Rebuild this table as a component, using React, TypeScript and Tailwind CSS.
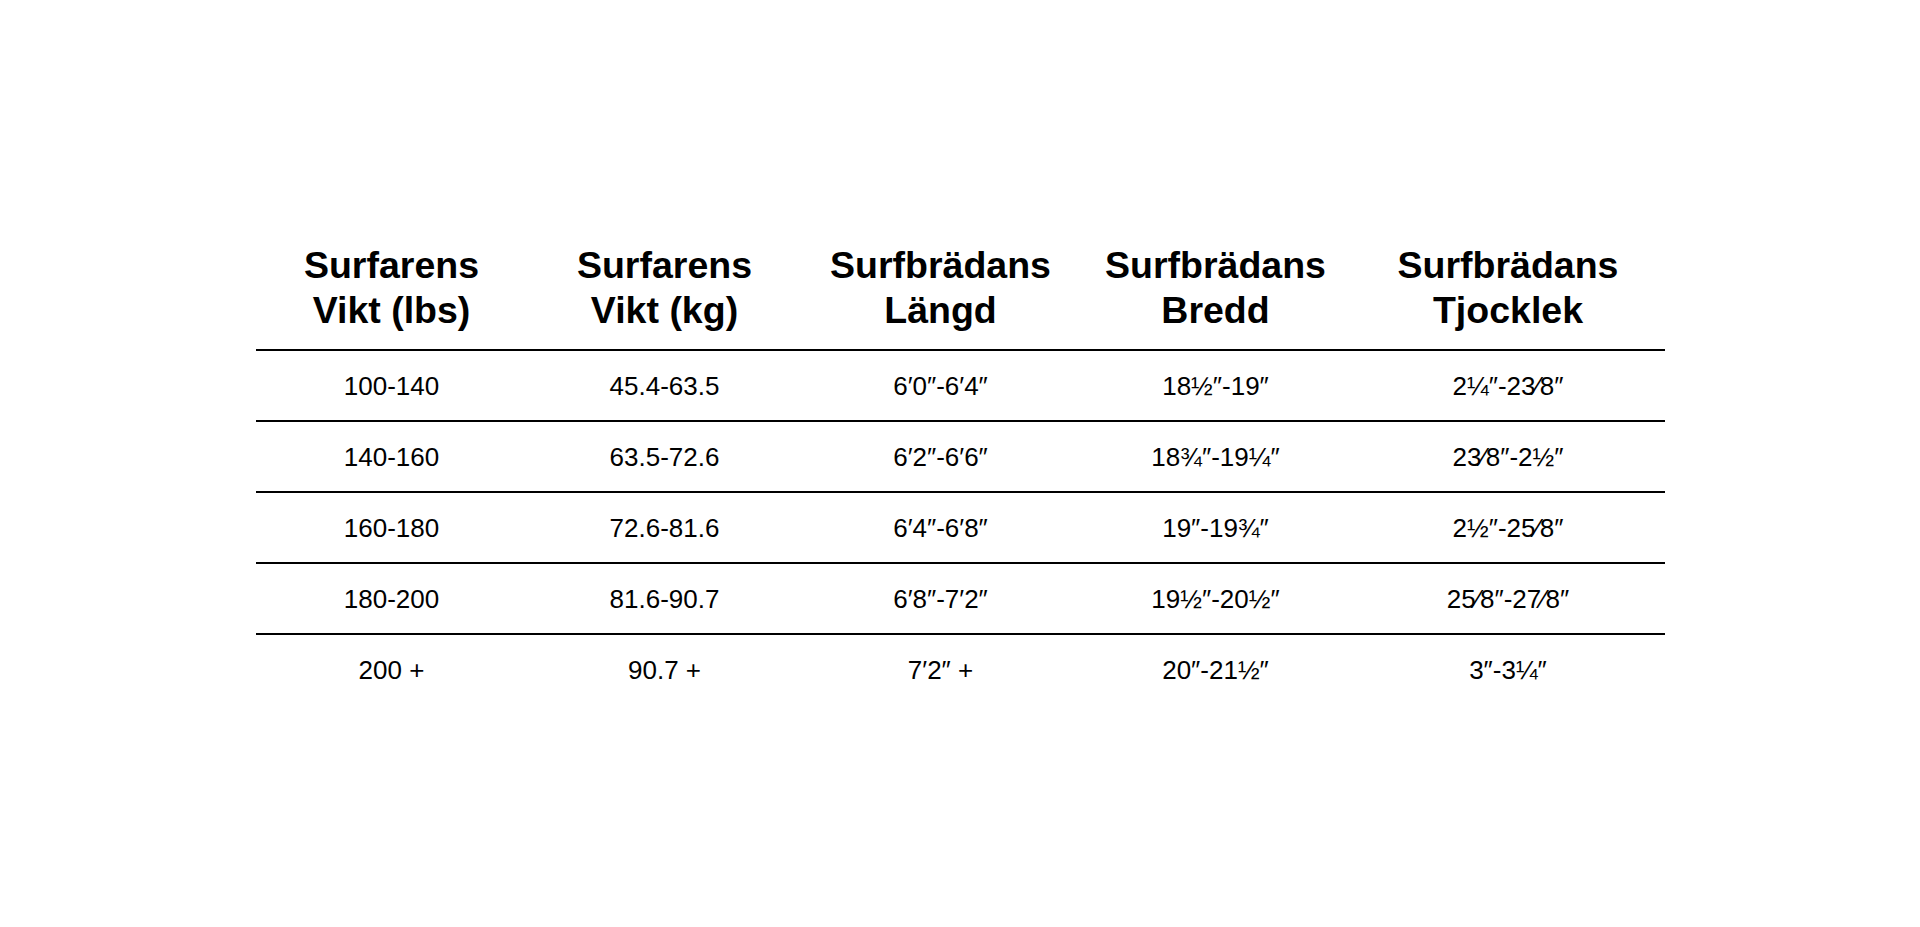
import React from "react";

const headers: [string, string][] = [
  ["Surfarens", "Vikt (lbs)"],
  ["Surfarens", "Vikt (kg)"],
  ["Surfbrädans", "Längd"],
  ["Surfbrädans", "Bredd"],
  ["Surfbrädans", "Tjocklek"],
];

const rows: string[][] = [
  ["100-140", "45.4-63.5", "6′0″-6′4″", "18½″-19″", "2¼″-23⁄8″"],
  ["140-160", "63.5-72.6", "6′2″-6′6″", "18¾″-19¼″", "23⁄8″-2½″"],
  ["160-180", "72.6-81.6", "6′4″-6′8″", "19″-19¾″", "2½″-25⁄8″"],
  ["180-200", "81.6-90.7", "6′8″-7′2″", "19½″-20½″", "25⁄8″-27⁄8″"],
  ["200 +", "90.7 +", "7′2″ +", "20″-21½″", "3″-3¼″"],
];

export default function App() {
  return (
    <div
      className="flex h-[927px] w-full items-center justify-center bg-white text-black"
      style={{ fontFamily: '"Liberation Sans", Arial, sans-serif' }}
    >
      <div className="w-[1409px]">
        <div className="grid grid-cols-[272px_274px_278px_272px_313px] border-b-2 border-black pt-[20px] pb-[16px]">
          {headers.map((h, i) => (
            <div key={i} className="text-center text-[37.5px] font-bold leading-[45px]">
              <div>{h[0]}</div>
              <div>{h[1]}</div>
            </div>
          ))}
        </div>
        {rows.map((r, ri) => (
          <div
            key={ri}
            className={
              ri < rows.length - 1
                ? "grid h-[71px] grid-cols-[272px_274px_278px_272px_313px] items-center border-b-2 border-black"
                : "grid h-[69px] grid-cols-[272px_274px_278px_272px_313px] items-center"
            }
          >
            {r.map((c, ci) => (
              <div key={ci} className="text-center text-[26px] leading-[30px]">
                {c}
              </div>
            ))}
          </div>
        ))}
      </div>
    </div>
  );
}
